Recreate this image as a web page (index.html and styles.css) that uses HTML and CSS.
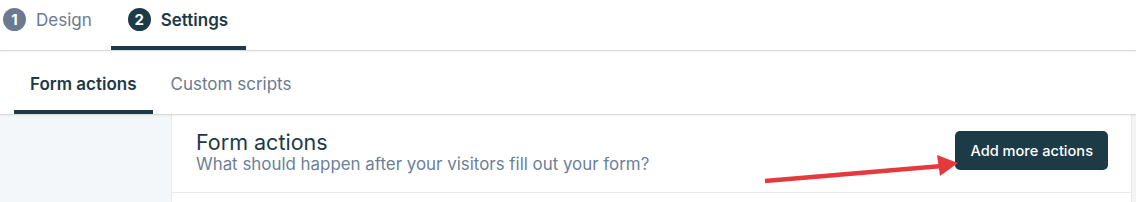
FILE: index.html
```html
<!DOCTYPE html>
<html>
<head>
<meta charset="utf-8">
<link rel="stylesheet" href="styles.css">
</head>
<body>
<div class="page">
  <div class="steps">
    <div class="step">
      <span class="num num-muted">1</span>
      <span class="step-label">Design</span>
    </div>
    <div class="step step-active">
      <span class="num">2</span>
      <span class="step-label">Settings</span>
    </div>
  </div>
  <div class="subtabs">
    <div class="subtab subtab-active">Form actions</div>
    <div class="subtab">Custom scripts</div>
  </div>
  <div class="content">
    <aside class="side"></aside>
    <main class="main">
      <div class="header">
        <div class="titles">
          <h1 class="title">Form actions</h1>
          <p class="subtitle">What should happen after your visitors fill out your form?</p>
        </div>
        <button class="btn">Add more actions</button>
      </div>
    </main>
    <div class="scroll"></div>
  </div>
  <svg class="arrow" width="1136" height="202" viewBox="0 0 1136 202">
    <line x1="765" y1="181" x2="942" y2="166" stroke="#e53a3d" stroke-width="4.5" stroke-linecap="butt"/>
    <polygon points="958,163 937,155 940,176" fill="#e53a3d"/>
  </svg>
</div>
</body>
</html>
```
FILE: styles.css
```css
* { box-sizing: border-box; }
html, body { margin: 0; padding: 0; background: #fff; }
body { font-family: Inter, "Noto Sans", sans-serif; color: #1d3a47; }
.page { position: relative; width: 1136px; height: 202px; overflow: hidden; }

.steps {
  display: flex;
  height: 51px;
  border-bottom: 1px solid #d9dde1;
  box-shadow: 0 1px 2px rgba(0,0,0,0.06);
  position: relative;
  z-index: 2;
  background: #fff;
}
.step {
  display: flex;
  align-items: center;
  gap: 10px;
  padding: 0 19px 7px 3px;
  height: 50px;
  font-size: 17px;
  color: #6c7a8f;
  border-bottom: 4px solid transparent;
}
.step-active {
  padding-left: 17px;
  padding-right: 18px;
  color: #1d3a47;
  font-weight: 600;
  border-bottom-color: #1d3a47;
}
.num {
  width: 23px;
  height: 23px;
  border-radius: 50%;
  background: #1d3a47;
  color: #fff;
  font-size: 15px;
  font-weight: 700;
  display: flex;
  align-items: center;
  justify-content: center;
}
.num-muted { background: #6c7a8f; }

.subtabs {
  display: flex;
  height: 64px;
  padding-left: 14px;
  border-bottom: 1px solid #d9dde1;
  box-shadow: 0 1px 2px rgba(0,0,0,0.06);
  position: relative;
  z-index: 1;
  background: #fff;
}
.subtab {
  display: flex;
  align-items: center;
  padding: 7px 16px 0;
  font-size: 17px;
  color: #6c7a8f;
  border-bottom: 4px solid transparent;
  margin-right: 2px;
}
.subtab-active {
  color: #1d3a47;
  font-weight: 600;
  border-bottom-color: #1d3a47;
}

.content {
  display: flex;
  height: 87px;
}
.side {
  width: 172px;
  background: #f4f7fa;
  border-right: 1px solid #e6eaee;
}
.main {
  flex: 1;
  border-right: 1px solid #e6eaee;
}
.header {
  display: flex;
  align-items: flex-start;
  justify-content: space-between;
  padding: 15px 23px 18px 24px;
  border-bottom: 1px solid #e6eaee;
}
.title {
  margin: 0;
  font-size: 21.5px;
  line-height: 24px;
  font-weight: 400;
  color: #1d3a47;
}
.subtitle {
  margin: 0;
  font-size: 16.9px;
  line-height: 20px;
  color: #6c7f97;
}
.btn {
  margin-top: 1px;
  height: 39px;
  padding: 0 15px;
  background: #1d3a47;
  color: #fff;
  border: none;
  border-radius: 5px;
  font-family: Inter, "Noto Sans", sans-serif;
  font-size: 14.6px;
  font-weight: 500;
}
.scroll {
  width: 4px;
  background: #f2f4f6;
}
.arrow {
  position: absolute;
  left: 0;
  top: 0;
  pointer-events: none;
  z-index: 5;
}
```
